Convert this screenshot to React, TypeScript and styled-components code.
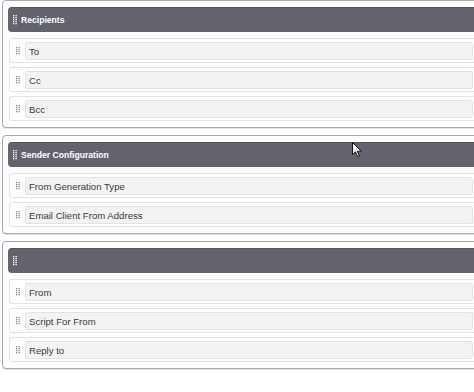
import React from "react";
import styled, { createGlobalStyle } from "styled-components";

const Global = createGlobalStyle`
  html, body { margin: 0; padding: 0; background: #ffffff; overflow: hidden; }
  body { font-family: "Liberation Sans", Arial, sans-serif; }
`;

const Page = styled.div`
  position: relative;
  width: 474px;
  height: 392px;
  overflow: hidden;
  background: #fff;
`;

const Stack = styled.div`
  display: flex;
  flex-direction: column;
  gap: 7px;
  margin-left: 2px;
  width: 486px;
  min-width: 486px;
`;

const Panel = styled.section`
  border: 1px solid #a9a9ab;
  border-radius: 4px;
  padding: 6px 5px 6px 5px;
  display: flex;
  flex-direction: column;
  background: #fff;
  box-shadow: 0 1px 0 #e4e4e4;
`;

const Header = styled.div`
  height: 25px;
  background: #63636e;
  border-radius: 4px 0 0 4px;
  border-top: 1px solid #55555f;
  box-sizing: border-box;
  display: flex;
  align-items: center;
  padding-left: 5px;
  gap: 4px;
  color: #ffffff;
  font-weight: bold;
  font-size: 8.6px;
  margin-bottom: 6px;
`;

const Rows = styled.div`
  display: flex;
  flex-direction: column;
  gap: 4px;
  padding-left: 1px;
`;

const Row = styled.div`
  height: 25px;
  box-sizing: border-box;
  border: 1px solid #e3e3e5;
  border-radius: 3px;
  display: flex;
  align-items: center;
  padding: 3px 8px 2px 6px;
  gap: 5px;
  background: #fff;
`;

const Field = styled.div`
  flex: 1;
  height: 18px;
  box-sizing: border-box;
  background: #f3f3f3;
  border: 1px solid #e3e3e3;
  border-radius: 2px;
  display: flex;
  align-items: center;
  padding-left: 3px;
  font-size: 9.6px;
  color: #3a3a3a;
`;

const Cursor = styled.svg`
  position: absolute;
  left: 352px;
  top: 142px;
`;

const Grip: React.FC<{ rows: number; color: string }> = ({ rows, color }) => {
  const dots: React.ReactNode[] = [];
  for (let r = 0; r < rows; r++) {
    dots.push(<rect key={`a${r}`} x={0} y={r * 2} width={1.3} height={1.3} fill={color} />);
    dots.push(<rect key={`b${r}`} x={2.5} y={r * 2} width={1.3} height={1.3} fill={color} />);
  }
  return (
    <svg width="4" height={rows * 2} viewBox={`0 0 4 ${rows * 2}`} style={{ flex: "none" }}>
      {dots}
    </svg>
  );
};

const sections: { title: string; rows: string[] }[] = [
  { title: "Recipients", rows: ["To", "Cc", "Bcc"] },
  { title: "Sender Configuration", rows: ["From Generation Type", "Email Client From Address"] },
  { title: "", rows: ["From", "Script For From", "Reply to"] },
];

export default function App() {
  return (
    <Page>
      <Global />
      <Stack>
        {sections.map((s, i) => (
          <Panel key={i}>
            <Header>
              <Grip rows={5} color="#ffffff" />
              {s.title && <span>{s.title}</span>}
            </Header>
            <Rows>
              {s.rows.map((r) => (
                <Row key={r}>
                  <Grip rows={4} color="#8a8a8a" />
                  <Field>{r}</Field>
                </Row>
              ))}
            </Rows>
          </Panel>
        ))}
      </Stack>
      <Cursor width="11" height="16" viewBox="0 0 11 16">
        <path d="M0.5 0.5 L0.5 12.5 L3.5 9.8 L5.6 14.5 L7.3 13.8 L5.3 9.2 L9.3 9.2 Z" fill="#ffffff" stroke="#111111" strokeWidth="1" strokeLinejoin="round" />
      </Cursor>
    </Page>
  );
}
